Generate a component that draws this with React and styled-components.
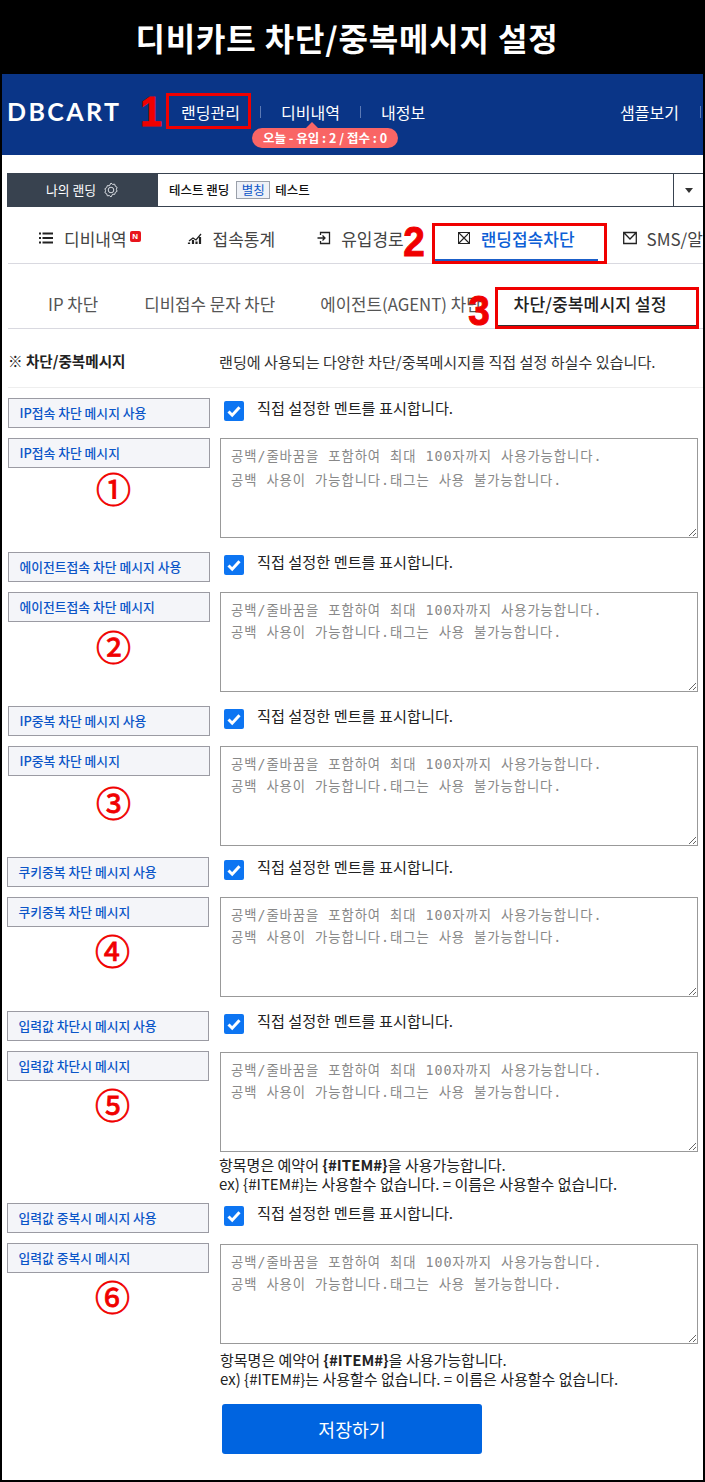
import React from "react";
import styled, { createGlobalStyle } from "styled-components";

const KR = `"Noto Sans CJK KR", "Noto Sans", sans-serif`;
const red = "#f00000";

const Global = createGlobalStyle`
  html, body { margin: 0; padding: 0; background: #000; }
  * { box-sizing: border-box; }
  body { font-family: ${KR}; }
`;

const Page = styled.div`
  position: relative; width: 705px; height: 1482px; overflow: hidden; background: #000;
`;
const Title = styled.h1`
  height: 74px; margin: 0; padding-right: 11px; display: flex; align-items: center; justify-content: center;
  color: #fff; font: 700 32px/1 ${KR}; letter-spacing: 0.85px;
`;
const Frame = styled.div`
  width: 701px; height: 1406px; margin-left: 2px; background: #fff; overflow: hidden;
`;
const Nav = styled.nav`
  position: relative; height: 81px; background: #0a3587; display: flex; align-items: center;
  padding: 0 0 6px 5px; color: #fff;
`;
const Logo = styled.div`
  font: 700 25px/1 "Lato", "Liberation Sans", sans-serif; letter-spacing: 2.4px; width: 174px;
`;
const NavItem = styled.a`
  font: 400 16px/1 ${KR}; width: ${p => p.$w}px; white-space: nowrap;
`;
const NavSep = styled.i`
  width: 1px; height: 12px; background: #5c7ab5; margin-right: ${p => p.$mr}px;
`;
const Pill = styled.div`
  position: absolute; left: 250px; top: 54px; width: 146px; height: 20px; border-radius: 10px; background: #f96565;
  color: #fff; font: 700 12.5px/20px ${KR}; text-align: center; white-space: nowrap;
  &::before { content: ""; position: absolute; left: 54px; top: -6px; border: 6px solid transparent; border-top: 0; border-bottom-color: #f96565; }
`;
const Selector = styled.div`
  height: 34px; margin: 18px 0 0 5px; display: flex; border-top: 1px solid #38424f; border-bottom: 1px solid #38424f;
  font: 500 12.5px/1 ${KR};
`;
const SelHead = styled.div`
  width: 151px; background: #38424f; color: #fff; display: flex; align-items: center; justify-content: center; gap: 7px;
  font-weight: 400; font-size: 12.8px;
`;
const SelBody = styled.div`
  flex: 1; display: flex; align-items: center; padding-left: 11px; color: #111;
`;
const Alias = styled.span`
  margin: 0 5px 0 7px; padding: 2px 0; width: 34px; text-align: center; background: #eef1f7; border: 1px solid #9aa0aa; color: #0b55c8; font-weight: 400;
`;
const Caret = styled.div`
  width: 30px; border-left: 1px solid #38424f; display: flex; align-items: center; justify-content: center;
  &::after { content: ""; border: 4px solid transparent; border-bottom: 0; border-top: 5px solid #333; }
`;
const Tabs = styled.div`
  height: ${p => p.$h}px; margin-left: 6px; padding-left: ${p => p.$pl}px; display: flex; align-items: stretch; white-space: nowrap;
  border-bottom: 1px solid #d9d9e0; overflow: hidden;
`;
const Tab = styled.div`
  display: flex; align-items: center; gap: ${p => p.$gap}px; margin-left: ${p => p.$ml || 0}px;
  padding: 12px ${p => (p.$active ? 23 : 0)}px 2px; flex: none;
  font: ${p => (p.$active ? 500 : 400)} 17px/1 ${KR}; color: ${p => (p.$active ? "#0d5fd6" : "#444")};
  border-bottom: 4px solid ${p => (p.$active ? "#1a5fc9" : "transparent")};
`;
const Sub = styled.div`
  flex: none; display: flex; align-items: center; margin-left: ${p => p.$ml || 0}px; padding: 22px ${p => (p.$active ? 30 : 0)}px 3px ${p => (p.$active ? 16 : 0)}px;
  font: ${p => (p.$active ? 500 : 400)} ${p => (p.$active ? 17.2 : 16.8)}px/1 ${KR}; color: ${p => (p.$active ? "#222" : "#555")};
  border-bottom: 3px solid ${p => (p.$active ? "#333" : "transparent")};
`;
const Intro = styled.div`
  height: 59px; margin-left: 6px; display: flex; align-items: center; border-bottom: 1px solid #eee; padding-top: 7px;
  font: 400 15.1px/1 ${KR}; color: #333;
`;
const IntroHead = styled.b`
  width: 211px; font-weight: 700; font-size: 14.6px; color: #222;
`;
const Form = styled.div`
  padding: 10px 0 0 4px;
`;
const Section = styled.section`
  display: grid; grid-template-columns: 202px 478px; column-gap: ${p => 12 - p.$ml}px; row-gap: 10px;
  margin-left: ${p => p.$ml}px; margin-bottom: ${p => p.$mb}px; width: 696px;
`;
const Label = styled.div`
  height: 30px; background: #f4f5f9; border: 1px solid #9b9ba3; padding-left: 10.5px; display: flex; align-items: center;
  font: 500 12.8px/1 ${KR}; color: #0b55c8; white-space: nowrap;
`;
const LabelCol = styled.div`
  display: flex; flex-direction: column;
`;
const Num = styled.div`
  align-self: center; padding-left: 9px; color: ${red}; font: 400 35px/1 ${KR}; margin-top: ${p => p.$mt}px; -webkit-text-stroke: 0.8px ${red};
`;
const CheckRow = styled.div`
  position: relative; display: flex; align-items: flex-start; padding: 3px 0 0 4px; gap: 13px; font: 400 15.2px/1 ${KR}; color: #222;
`;
const CheckLine = styled.span`
  margin-top: -1px; white-space: nowrap;
`;
const CheckBox = styled.input`
  appearance: none; margin: 0; width: 20px; height: 20px; border-radius: 2px; background: #0d75f2; flex: none;
`;
const Tick = styled.svg`
  position: absolute; left: 4px; top: 3px; width: 20px; height: 20px; pointer-events: none;
`;
const Area = styled.textarea`
  display: block; width: 478px; height: 100px; margin-top: ${p => p.$mt}px; border: 1px solid #999; padding: ${p => (p.$lh === 24 ? 6 : 7)}px 10px; resize: both; outline: none;
  font: 400 13.33px/${p => p.$lh}px "DejaVu Sans Mono", ${KR}; letter-spacing: 0.95px; background: #fff; border-radius: 0; overflow: hidden;
  &::placeholder { color: #888; opacity: 1; }
`;
const Help = styled.div`
  grid-column: 2; margin: ${p => p.$mt}px 0 0 ${p => p.$ml}px; font: 400 15px/19px ${KR}; color: #222; white-space: nowrap;
  b { font-weight: 700; }
`;
const Save = styled.button`
  display: block; width: 260px; height: 50px; margin: 16px 0 0 216px; border: 0; border-radius: 3px; background: #0064e0; color: #fff;
  font: 400 18.3px/1 ${KR};
`;
const RedBox = styled.div`
  position: absolute; left: ${p => p.$x}px; top: ${p => p.$y}px; width: ${p => p.$w}px; height: ${p => p.$h}px;
  border: 3px solid ${red}; pointer-events: none;
`;
const Mark = styled.div`
  position: absolute; left: ${p => p.$x}px; top: ${p => p.$y}px; color: ${red}; transform: scaleX(0.9);
  font: 700 43px/1 "Liberation Sans", sans-serif; -webkit-text-stroke: 1px ${red};
`;
const Badge = styled.span`
  display: inline-flex; width: 11px; height: 11px; background: #e8141c; border-radius: 2px; color: #fff; font: 700 8px/11px "Liberation Sans", sans-serif;
  justify-content: center; margin-left: -7px; margin-top: -3px;
`;

const Ico = ({ children, w = 16 }) => (
  <svg width={w} height="16" viewBox={`0 0 ${w} 16`} fill="none" stroke="#222" strokeWidth="1.3">{children}</svg>
);
const Gear = () => (
  <svg width="16" height="16" viewBox="0 0 16 16" fill="none" stroke="#d8dce2" strokeWidth="1">
    <path d="M8 1l1.6 1.4 2.1-.2.6 2 1.8 1.1-.7 2 .7 2-1.8 1.1-.6 2-2.1-.2L8 15l-1.6-1.4-2.1.2-.6-2-1.8-1.1.7-2-.7-2 1.8-1.1.6-2 2.1.2z" />
    <circle cx="8" cy="8" r="2.8" />
  </svg>
);

const MSG = "공백/줄바꿈을 포함하여 최대 100자까지 사용가능합니다.\n공백 사용이 가능합니다.태그는 사용 불가능합니다.";
const helpLines = (
  <>
    항목명은 예약어 <b>{"{#ITEM#}"}</b>을 사용가능합니다.<br />
    ex) {"{#ITEM#}"}는 사용할수 없습니다. = 이름은 사용할수 없습니다.
  </>
);
const sections = [
  { use: "IP접속 차단 메시지 사용", msg: "IP접속 차단 메시지", n: "①", ml: 2, mb: 14, lh: 24, nt: 2, at: 0 },
  { use: "에이전트접속 차단 메시지 사용", msg: "에이전트접속 차단 메시지", n: "②", ml: 2, mb: 14, lh: 22, nt: 6, at: 0 },
  { use: "IP중복 차단 메시지 사용", msg: "IP중복 차단 메시지", n: "③", ml: 2, mb: 11, lh: 22, nt: 8, at: 0 },
  { use: "쿠키중복 차단 메시지 사용", msg: "쿠키중복 차단 메시지", n: "④", ml: 1, mb: 14, lh: 22, nt: 5, at: 0 },
  { use: "입력값 차단시 메시지 사용", msg: "입력값 차단시 메시지", n: "⑤", ml: 1, mb: 10, lh: 22, nt: 5, at: 1, help: -1, hmt: -7 },
  { use: "입력값 중복시 메시지 사용", msg: "입력값 중복시 메시지", n: "⑥", ml: 1, mb: 0, lh: 22, nt: 5, at: 1, help: 0, hmt: -4 },
];

export default function App() {
  return (
    <Page>
      <Global />
      <Title>디비카트 차단/중복메시지 설정</Title>
      <Frame>
        <Nav>
          <Logo>DBCART</Logo>
          <NavItem $w={79}>랜딩관리</NavItem>
          <NavSep $mr={20} />
          <NavItem $w={79}>디비내역</NavItem>
          <NavSep $mr={20} />
          <NavItem $w={239}>내정보</NavItem>
          <NavItem $w={80}>샘플보기</NavItem>
          <NavSep $mr={0} />
          <Pill>오늘 - 유입 : 2 / 접수 : 0</Pill>
        </Nav>
        <Selector>
          <SelHead>나의 랜딩 <Gear /></SelHead>
          <SelBody>테스트 랜딩 <Alias>별칭</Alias> 테스트</SelBody>
          <Caret />
        </Selector>
        <Tabs $pl={30} $h={57}>
          <Tab $gap={10}>
            <Ico w={16}><path d="M4.500 3.500H15M4.500 8H15M4.500 12.500H15M1 3.500h2M1 8h2M1 12.500h2" strokeWidth="1.8" /></Ico>
            디비내역 <Badge>N</Badge>
          </Tab>
          <Tab $ml={46} $gap={10}>
            <Ico><path d="M2 11l4-3 3 2 5-6" /><path d="M2 14v-1.500M6 14v-4M9.500 14v-2.500M13 14V7" strokeWidth="2.200" /></Ico>
            접속통계
          </Tab>
          <Tab $ml={42} $gap={10}>
            <Ico w={14}><path d="M3.500 5V2.500h9v11h-9V11M.5 8h7M5.500 5.500L8 8l-2.500 2.500" /></Ico>
            유입경로
          </Tab>
          <Tab $ml={31} $active $gap={11}>
            <Ico w={12}><path d="M.5 2.500h11v11H.5zM.5 2.500l11 11M11.500 2.500l-11 11" strokeWidth="1.1" /></Ico>
            랜딩접속차단
          </Tab>
          <Tab $ml={25} $gap={10}>
            <Ico w={14}><path d="M.7 2.500h12.600v11H.7zM.7 2.500L7 9l6.300-6.500" /></Ico>
            SMS/알림
          </Tab>
        </Tabs>
        <Tabs $pl={40} $h={65}>
          <Sub>IP 차단</Sub>
          <Sub $ml={46}>디비접수 문자 차단</Sub>
          <Sub $ml={45}>에이전트(AGENT) 차단</Sub>
          <Sub $ml={16} $active>차단/중복메시지 설정</Sub>
        </Tabs>
        <Intro>
          <IntroHead>※ 차단/중복메시지</IntroHead>
          랜딩에 사용되는 다양한 차단/중복메시지를 직접 설정 하실수 있습니다.
        </Intro>
        <Form>
          {sections.map(s => (
            <Section key={s.n} $ml={s.ml} $mb={s.mb}>
              <Label>{s.use}</Label>
              <CheckRow>
                <CheckBox type="checkbox" defaultChecked aria-label={s.use} />
                <Tick viewBox="0 0 20 20"><path d="M4.500 10.500l3.700 3.700 7.300-8" fill="none" stroke="#fff" strokeWidth="3" /></Tick>
                <CheckLine>직접 설정한 멘트를 표시합니다.</CheckLine>
              </CheckRow>
              <LabelCol>
                <Label>{s.msg}</Label>
                <Num $mt={s.nt}>{s.n}</Num>
              </LabelCol>
              <Area $lh={s.lh} $mt={s.at} placeholder={MSG} />
              {s.help !== undefined && <Help $ml={s.help} $mt={s.hmt}>{helpLines}</Help>}
            </Section>
          ))}
          <Save>저장하기</Save>
        </Form>
      </Frame>
      <RedBox $x={166} $y={93} $w={85} $h={36} />
      <Mark $x={139} $y={90}>1</Mark>
      <RedBox $x={432} $y={223} $w={175} $h={41} />
      <Mark $x={402} $y={220}>2</Mark>
      <RedBox $x={495} $y={287} $w={204} $h={42} />
      <Mark $x={467} $y={289}>3</Mark>
    </Page>
  );
}
